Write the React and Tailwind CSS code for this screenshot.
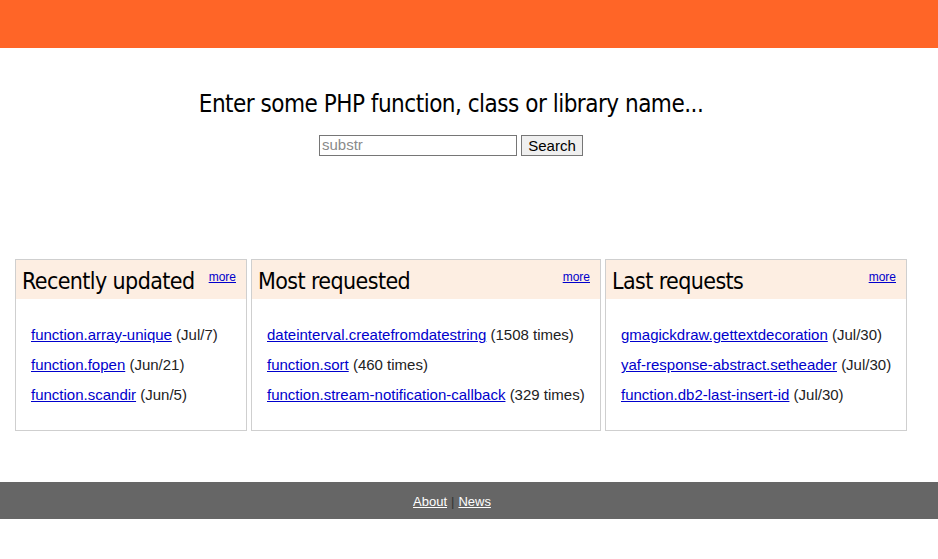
import React from "react";

const boxes = [
  {
    title: "Recently updated",
    w: "w-[232px]",
    items: [
      ["function.array-unique", "(Jul/7)"],
      ["function.fopen", "(Jun/21)"],
      ["function.scandir", "(Jun/5)"],
    ],
  },
  {
    title: "Most requested",
    w: "w-[350px]",
    items: [
      ["dateinterval.createfromdatestring", "(1508 times)"],
      ["function.sort", "(460 times)"],
      ["function.stream-notification-callback", "(329 times)"],
    ],
  },
  {
    title: "Last requests",
    w: "w-[302px]",
    items: [
      ["gmagickdraw.gettextdecoration", "(Jul/30)"],
      ["yaf-response-abstract.setheader", "(Jul/30)"],
      ["function.db2-last-insert-id", "(Jul/30)"],
    ],
  },
];

const tahoma = "font-['DejaVu_Sans_Condensed','DejaVu_Sans',sans-serif]";

export default function App() {
  return (
    <div className="w-[938px] h-[559px] bg-white font-['Liberation_Sans',Arial,sans-serif] text-[15px] text-[#222]">
      <div className="h-12 bg-[#ff6527]" />
      <div className="w-[902px]">
        <h1 className={`${tahoma} text-[24px] tracking-[-0.5px] text-black text-center pt-[40px] leading-[32px] whitespace-nowrap`}>
          Enter some PHP function, class or library name...
        </h1>
        <div className="flex justify-center items-center gap-[4px] mt-[15px]">
          <input
            className="w-[198px] h-[21px] border border-[#767676] px-[2px] text-[15px] placeholder:text-[#8a8a8a] outline-none"
            placeholder="substr"
          />
          <button className="h-[21px] w-[62px] border border-[#767676] bg-[#efefef] text-[15px] text-black leading-none">
            Search
          </button>
        </div>
      </div>
      <div className="flex gap-[4px] pl-[15px] mt-[103px]">
        {boxes.map((b) => (
          <div key={b.title} className={`${b.w} h-[172px] border border-[#cfcfcf] bg-white`}>
            <div className="h-[39px] bg-[#fdeee2] flex items-start justify-between px-[6px]">
              <span className={`${tahoma} text-[23px] tracking-[-0.6px] text-black leading-[42px] whitespace-nowrap`}>{b.title}</span>
              <a href="#" className="text-[12px] text-[#00c] underline mt-[10px] mr-[4px] leading-[14px]">more</a>
            </div>
            <div className="pl-[15px] pt-[27px] flex flex-col gap-[12px]">
              {b.items.map(([l, t]) => (
                <div key={l} className="leading-[18px] whitespace-nowrap">
                  <a href="#" className="text-[#0000cc] underline">{l}</a>{" "}
                  <span>{t}</span>
                </div>
              ))}
            </div>
          </div>
        ))}
      </div>
      <div className="mt-[51px] h-[37px] bg-[#666] text-[13px] text-white">
        <div className="w-[904px] h-full flex items-center justify-center pt-[2px]">
          <a href="#" className="underline text-white">About</a>
          <span className="text-[#333] mx-[4px]">|</span>
          <a href="#" className="underline text-white">News</a>
        </div>
      </div>
    </div>
  );
}
